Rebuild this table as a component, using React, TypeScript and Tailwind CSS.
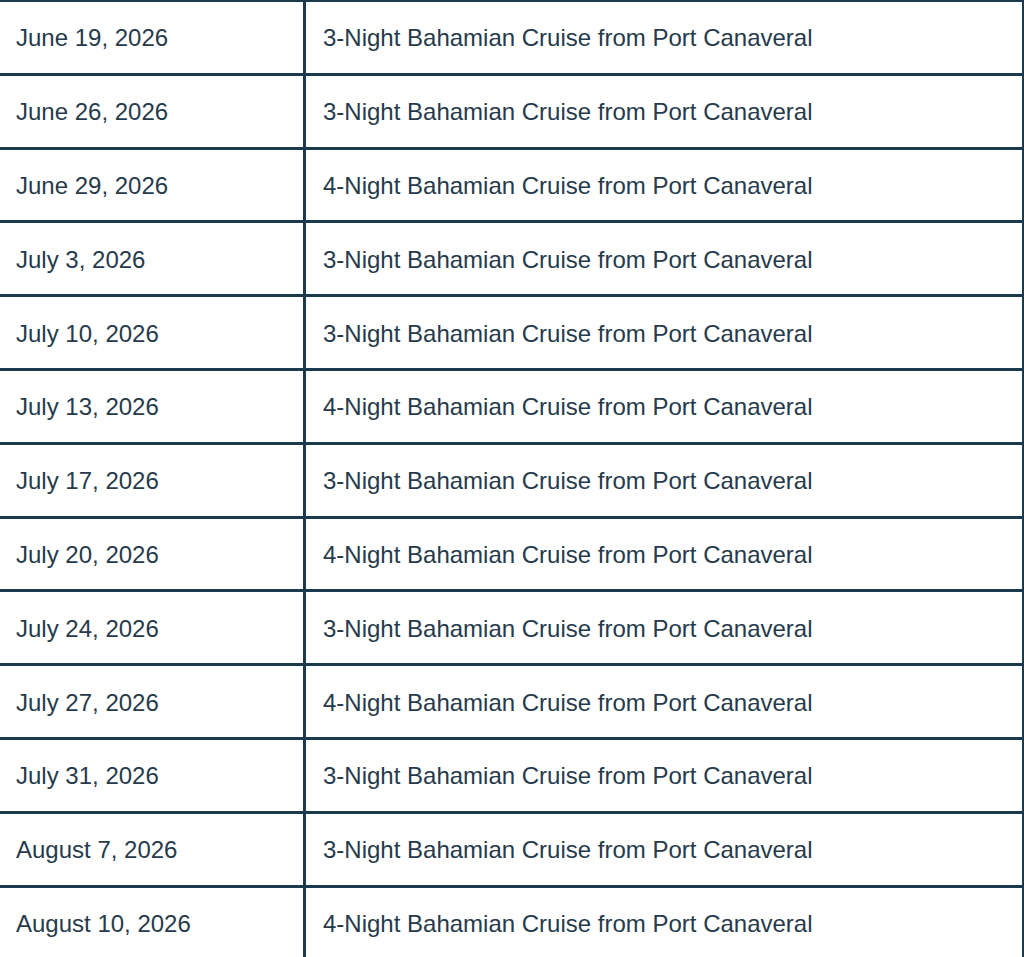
import React from "react";

const rows: [string, string][] = [
  ["June 19, 2026", "3-Night Bahamian Cruise from Port Canaveral"],
  ["June 26, 2026", "3-Night Bahamian Cruise from Port Canaveral"],
  ["June 29, 2026", "4-Night Bahamian Cruise from Port Canaveral"],
  ["July 3, 2026", "3-Night Bahamian Cruise from Port Canaveral"],
  ["July 10, 2026", "3-Night Bahamian Cruise from Port Canaveral"],
  ["July 13, 2026", "4-Night Bahamian Cruise from Port Canaveral"],
  ["July 17, 2026", "3-Night Bahamian Cruise from Port Canaveral"],
  ["July 20, 2026", "4-Night Bahamian Cruise from Port Canaveral"],
  ["July 24, 2026", "3-Night Bahamian Cruise from Port Canaveral"],
  ["July 27, 2026", "4-Night Bahamian Cruise from Port Canaveral"],
  ["July 31, 2026", "3-Night Bahamian Cruise from Port Canaveral"],
  ["August 7, 2026", "3-Night Bahamian Cruise from Port Canaveral"],
  ["August 10, 2026", "4-Night Bahamian Cruise from Port Canaveral"],
];

export default function App() {
  return (
    <div
      className="w-[1024px] h-[957px] overflow-hidden bg-white text-[#263a4c] text-[24px] leading-none"
      style={{ fontFamily: '"Liberation Sans", Arial, Helvetica, sans-serif' }}
    >
      <div className="border-t-2 border-r-2 border-[#1c3a4e]">
        {rows.map(([date, name], i) => (
          <div key={i} className="flex h-[73.8px] border-b-[3px] border-[#1c3a4e]">
            <div className="w-[306px] shrink-0 box-border flex items-center pl-[16px] pt-[2px] border-r-[3px] border-[#1c3a4e]">
              {date}
            </div>
            <div className="flex-1 flex items-center pl-[17px] pt-[2px]">{name}</div>
          </div>
        ))}
      </div>
    </div>
  );
}
